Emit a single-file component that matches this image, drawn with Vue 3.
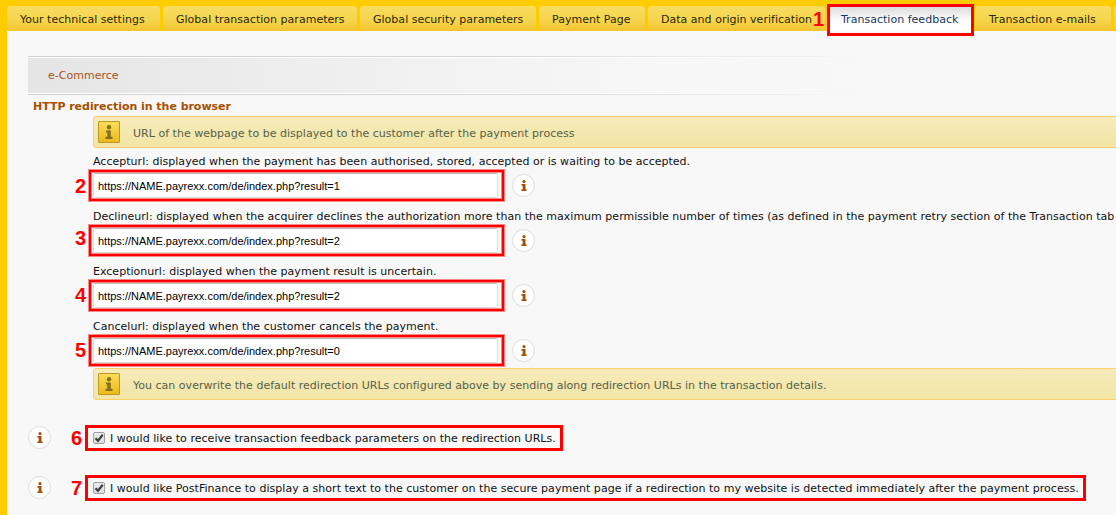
<template>
  <div class="page">
    <nav class="tabs">
      <a
        v-for="tab in tabs"
        :key="tab.label"
        class="tab"
        :class="{ active: tab.label === activeTab }"
        :style="{ width: tab.width + 'px' }"
        @click="activeTab = tab.label"
      >
        <span>{{ tab.label }}</span>
        <template v-if="tab.step">
          <b class="step step-tab">{{ tab.step }}</b>
          <i class="mark mark-tab"></i>
        </template>
      </a>
    </nav>

    <main class="content">
      <div class="section">
        <div class="section-title">e-Commerce</div>
      </div>
      <h3>HTTP redirection in the browser</h3>

      <div class="indent">
        <div class="notice">
          <span class="notice-icon">
            <svg width="8" height="14" viewBox="0 0 8 14">
              <circle cx="4" cy="2.2" r="2.2" />
              <path d="M1 5.5h4.8v6.3H7.5V14H.5v-2.2H2.3V7.5H1z" />
            </svg>
          </span>
          URL of the webpage to be displayed to the customer after the payment process
        </div>

        <div v-for="field in fields" :key="field.step" class="field">
          <label :for="'url' + field.step">{{ field.label }}</label>
          <div class="field-row">
            <input :id="'url' + field.step" v-model="field.value" type="text" />
            <span class="info">
              <svg width="6" height="11" viewBox="0 0 6 11">
                <circle cx="3" cy="1.6" r="1.6" />
                <path d="M.5 4h4v5.2H5.5V11H.5V9.2H1.7V5.8H.5z" />
              </svg>
            </span>
          </div>
          <b class="step step-field" :class="'step-' + field.step">{{ field.step }}</b>
          <i class="mark mark-field"></i>
        </div>

        <div class="notice">
          <span class="notice-icon">
            <svg width="8" height="14" viewBox="0 0 8 14">
              <circle cx="4" cy="2.2" r="2.2" />
              <path d="M1 5.5h4.8v6.3H7.5V14H.5v-2.2H2.3V7.5H1z" />
            </svg>
          </span>
          You can overwrite the default redirection URLs configured above by sending along redirection URLs in the transaction details.
        </div>
      </div>

      <div v-for="option in options" :key="option.step" class="option">
        <span class="info">
          <svg width="6" height="11" viewBox="0 0 6 11">
            <circle cx="3" cy="1.6" r="1.6" />
            <path d="M.5 4h4v5.2H5.5V11H.5V9.2H1.7V5.8H.5z" />
          </svg>
        </span>
        <label class="check">
          <input v-model="option.checked" type="checkbox" />
          <span class="box">
            <svg v-if="option.checked" width="10" height="10" viewBox="0 0 10 10">
              <path d="M1.5 5.2 4 7.8 8.7 1.8" />
            </svg>
          </span>
          <span class="check-label">{{ option.label }}</span>
          <b class="step step-option">{{ option.step }}</b>
          <i class="mark mark-option"></i>
        </label>
      </div>
    </main>
  </div>
</template>

<script setup>
import { ref } from "vue";

const activeTab = ref("Transaction feedback");

const tabs = [
  { label: "Your technical settings", width: 153 },
  { label: "Global transaction parameters", width: 194 },
  { label: "Global security parameters", width: 176 },
  { label: "Payment Page", width: 106 },
  { label: "Data and origin verification", width: 177 },
  { label: "Transaction feedback", width: 144, step: 1 },
  { label: "Transaction e-mails", width: 136 },
  { label: "", width: 100 },
];

const fields = ref([
  {
    step: 2,
    label:
      "Accepturl: displayed when the payment has been authorised, stored, accepted or is waiting to be accepted.",
    value: "https://NAME.payrexx.com/de/index.php?result=1",
  },
  {
    step: 3,
    label:
      "Declineurl: displayed when the acquirer declines the authorization more than the maximum permissible number of times (as defined in the payment retry section of the Transaction tab",
    value: "https://NAME.payrexx.com/de/index.php?result=2",
  },
  {
    step: 4,
    label: "Exceptionurl: displayed when the payment result is uncertain.",
    value: "https://NAME.payrexx.com/de/index.php?result=2",
  },
  {
    step: 5,
    label: "Cancelurl: displayed when the customer cancels the payment.",
    value: "https://NAME.payrexx.com/de/index.php?result=0",
  },
]);

const options = ref([
  {
    step: 6,
    checked: true,
    label:
      "I would like to receive transaction feedback parameters on the redirection URLs.",
  },
  {
    step: 7,
    checked: true,
    label:
      "I would like PostFinance to display a short text to the customer on the secure payment page if a redirection to my website is detected immediately after the payment process.",
  },
]);
</script>

<style>
body {
  background: #f8f8f8;
  overflow: hidden;
}
</style>

<style scoped>
.page {
  box-sizing: border-box;
  width: 100%;
  height: 515px;
  border-left: 7px solid #fc0;
  overflow: hidden;
  background: #f8f8f8;
  color: #111;
  font: 11px/14px "DejaVu Sans", Verdana, sans-serif;
  letter-spacing: 0.02px;
  white-space: nowrap;
}

.tabs {
  display: flex;
  gap: 3px;
  height: 25px;
  padding-top: 6px;
  background: #fc0;
}

.tab {
  position: relative;
  flex: none;
  box-sizing: border-box;
  height: 25px;
  padding-left: 13px;
  border-radius: 3px 3px 0 0;
  background: linear-gradient(#f9dc60, #f5d44c 60%, #f3c52f);
  color: #2a2608;
  line-height: 28px;
}

.tab.active {
  background: linear-gradient(#d9d9d9, #fff 60%);
  color: #16395f;
}

.tab.active + .tab {
  padding-left: 14px;
}

.content {
  padding: 25px 0 0 21px;
}

.section {
  width: 842px;
  padding: 1px 0;
  background: linear-gradient(90deg, #d2d2d2, #d6d6d6 55%, #f8f8f8);
}

.section-title {
  height: 35px;
  padding-left: 20px;
  border: solid #fff;
  border-width: 1px 0;
  border-image: linear-gradient(90deg, #fff 70%, #f8f8f8) 1;
  background: linear-gradient(90deg, #e5e5e5, #f1f1f1 45%, #f7f7f7 75%, #f8f8f8);
  color: #a95314;
  line-height: 35px;
}

h3 {
  height: 21px;
  margin: 0 0 0 5px;
  color: #a94f00;
  font-size: 11px;
  letter-spacing: -0.03px;
  line-height: 24px;
}

.indent {
  margin-left: 65px;
}

.notice {
  display: flex;
  align-items: center;
  box-sizing: border-box;
  height: 32px;
  margin-right: -10px;
  padding: 4px 0 0 4px;
  border: 1px solid #fad06b;
  border-radius: 3px;
  background: linear-gradient(#f7ebbb, #f2e5a5);
  color: #56604a;
}

.notice-icon {
  display: flex;
  align-items: center;
  justify-content: center;
  box-sizing: border-box;
  width: 22px;
  height: 22px;
  margin: -4px 13px 0 0;
  border: 1px solid #b8981f;
  border-radius: 1px;
  background: linear-gradient(#f9dd5c, #edba1c);
  fill: #82701c;
}

.field {
  position: relative;
  height: 55px;
}

.field > label {
  display: block;
  height: 25px;
  line-height: 28px;
}

.field-row {
  display: flex;
  align-items: center;
  gap: 14px;
  height: 25px;
}

.field input {
  box-sizing: border-box;
  width: 405px;
  height: 25px;
  padding: 1px 4px 0;
  border: 1px solid #ddd;
  border-top-color: #bbb;
  border-radius: 2px;
  outline: none;
  background: #fff;
  color: #000;
  font: 11px "Liberation Sans", Arial, sans-serif;
}

.info {
  display: flex;
  align-items: center;
  justify-content: center;
  flex: none;
  box-sizing: border-box;
  width: 23px;
  height: 23px;
  border: 1px solid #ddd;
  border-radius: 50%;
  background: #fff;
  fill: #a94f00;
}

.option {
  display: flex;
  align-items: center;
  height: 23px;
  margin-top: 27px;
  letter-spacing: 0.034px;
}

.indent + .option {
  margin-top: 26px;
}

.check {
  position: relative;
  display: flex;
  align-items: center;
  height: 23px;
  margin-left: 42px;
}

.check input {
  position: absolute;
  opacity: 0;
}

.check-label {
  padding-top: 2px;
}

.box {
  box-sizing: border-box;
  width: 12px;
  height: 12px;
  margin-right: 5px;
  border: 1px solid #a0a0a0;
  border-radius: 2px;
  background: linear-gradient(#eee, #ddd);
}

.box svg {
  display: block;
  fill: none;
  stroke: #404040;
  stroke-width: 2.2;
}

/* numbered steps and the red frames they point at */
.step {
  position: absolute;
  color: #f00;
  font: bold 20px/20px "Liberation Sans", Arial, sans-serif;
}

.mark {
  position: absolute;
  box-sizing: border-box;
  border: 3px solid #f00;
}

.step-tab {
  z-index: 1;
  top: 3px;
  left: -15px;
}

.mark-tab {
  top: -2px;
  left: -1px;
  width: 147px;
  height: 32px;
}

.step-field {
  top: 28px;
  left: -18px;
}

.step-3 {
  top: 25px;
}

.step-4,
.step-5 {
  top: 27px;
}

.mark-field {
  top: 22px;
  left: -4px;
  width: 415px;
  height: 31px;
  border-width: 2px;
  box-shadow: 0 0 0 1px rgba(255, 0, 0, 0.45),
    inset 0 0 0 1px rgba(255, 0, 0, 0.45);
}

.step-option {
  top: 2px;
  left: -22px;
}

.mark-option {
  top: -1px;
  right: -7px;
  left: -8px;
  height: 26px;
}
</style>
